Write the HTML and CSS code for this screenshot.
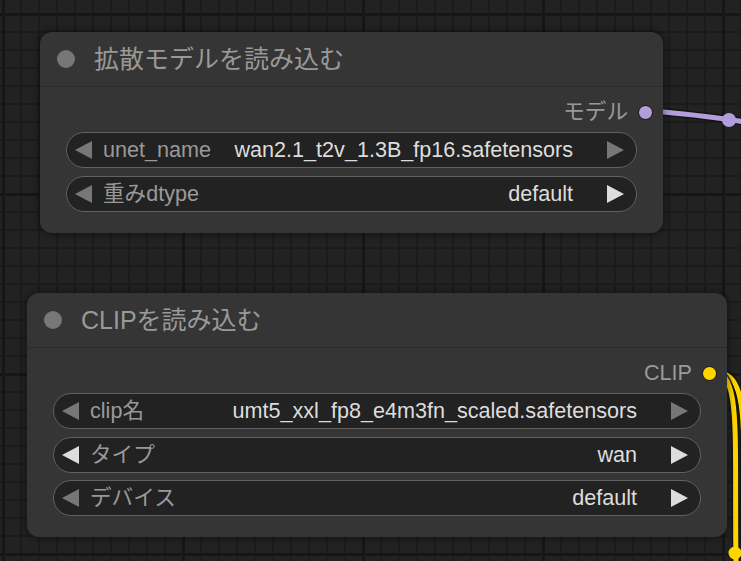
FILE: index.html
```html
<!DOCTYPE html>
<html lang="ja">
<head>
  <meta charset="UTF-8" />
  <title>ComfyUI nodes</title>
  <link rel="stylesheet" href="styles.css">
</head>
<body>
  <div class="canvas">
    <!-- links are drawn under the nodes -->
    <svg class="links" width="741" height="561" viewBox="0 0 741 561">
      <path d="M646 111 C 690 113, 715 118, 760 124" class="link-shadow" />
      <path d="M646 111 C 690 113, 715 118, 760 124" stroke="#b39ddb" class="link" />
      <circle cx="729" cy="120" r="7" fill="#b39ddb" />

      <path d="M711 371 C 752 371, 742 420, 745 561" class="link-shadow" />
      <path d="M711 371 C 752 371, 742 420, 745 561" stroke="#ffd500" class="link" />
      <path d="M711 371 C 742 371, 734 430, 736 561" class="link-shadow" />
      <path d="M711 371 C 742 371, 734 430, 736 561" stroke="#ffd500" class="link" />
      <circle cx="735" cy="553" r="6.5" fill="#ffd500" />
    </svg>

    <div class="node node-model">
      <div class="node-title"><span class="title-dot"></span>拡散モデルを読み込む</div>
      <div class="node-body">
        <div class="slot-out">モデル<span class="slot-dot dot-model"></span></div>
        <div class="widget">
          <span class="arrow arrow-left dim"></span>
          <span class="w-label">unet_name</span>
          <span class="w-value">wan2.1_t2v_1.3B_fp16.safetensors</span>
          <span class="arrow arrow-right dim"></span>
        </div>
        <div class="widget">
          <span class="arrow arrow-left dim"></span>
          <span class="w-label">重みdtype</span>
          <span class="w-value">default</span>
          <span class="arrow arrow-right"></span>
        </div>
      </div>
    </div>

    <div class="node node-clip">
      <div class="node-title"><span class="title-dot"></span>CLIPを読み込む</div>
      <div class="node-body">
        <div class="slot-out">CLIP<span class="slot-dot dot-clip"></span></div>
        <div class="widget">
          <span class="arrow arrow-left dim"></span>
          <span class="w-label">clip名</span>
          <span class="w-value">umt5_xxl_fp8_e4m3fn_scaled.safetensors</span>
          <span class="arrow arrow-right dim"></span>
        </div>
        <div class="widget">
          <span class="arrow arrow-left"></span>
          <span class="w-label">タイプ</span>
          <span class="w-value">wan</span>
          <span class="arrow arrow-right"></span>
        </div>
        <div class="widget">
          <span class="arrow arrow-left dim"></span>
          <span class="w-label">デバイス</span>
          <span class="w-value">default</span>
          <span class="arrow arrow-right"></span>
        </div>
      </div>
    </div>
  </div>
</body>
</html>
```

FILE: styles.css
```css
body {
  margin: 0;
  font-family: "Liberation Sans", "Noto Sans CJK JP", sans-serif;
  background: #111;
}

/* graph canvas with minor / major grid lines */
.canvas {
  position: relative;
  width: 741px;
  height: 561px;
  overflow: hidden;
  background-color: #222;
  background-image:
    linear-gradient(90deg, #161616 3px, transparent 3px),
    linear-gradient(#161616 3px, transparent 3px),
    linear-gradient(90deg, #1b1b1b 2px, transparent 2px),
    linear-gradient(#1b1b1b 2px, transparent 2px);
  background-size: 180px 180px, 180px 180px, 18px 18px, 18px 18px;
  background-position: 2px 13px, 2px 13px, 2px 13px, 2px 13px;
}

.links {
  position: absolute;
  left: 0;
  top: 0;
}
.link {
  fill: none;
  stroke-width: 5;
}
.link-shadow {
  fill: none;
  stroke: #111;
  stroke-width: 8;
  stroke-opacity: 0.8;
}

.node {
  position: absolute;
  background: #353535;
  border-radius: 12px;
  box-shadow: 0 0 7px 2px rgba(0, 0, 0, 0.35);
}
.node-model {
  left: 40px;
  top: 32px;
  width: 623px;
}
.node-clip {
  left: 27px;
  top: 293px;
  width: 700px;
}

.node-title {
  display: flex;
  align-items: center;
  height: 54px;
  line-height: 54px;
  padding-left: 17px;
  border-bottom: 1px solid #2c2c2c;
  color: #999;
  font-size: 25px;
}
.title-dot {
  width: 18px;
  height: 18px;
  border-radius: 50%;
  background: #777;
  margin-right: 19px;
}

.node-body {
  display: flex;
  flex-direction: column;
  padding: 7px 26px 21px 26px;
}

.slot-out {
  display: flex;
  align-items: center;
  justify-content: flex-end;
  height: 36px;
  line-height: 36px;
  margin-right: -16px;
  margin-bottom: 2px;
  color: #999;
  font-size: 21.6px;
}
.slot-dot {
  width: 13px;
  height: 13px;
  border-radius: 50%;
  border: 1.5px solid #111;
  margin-left: 10px;
}
.dot-model {
  background: #b39ddb;
}
.dot-clip {
  background: #ffd500;
}

.widget {
  display: flex;
  align-items: center;
  height: 36px;
  line-height: 34px;
  box-sizing: border-box;
  margin-bottom: 7.5px;
  padding: 0 12px 0 8px;
  border: 1px solid #616161;
  border-radius: 18px;
  background: #222;
  font-size: 21.6px;
}
.widget:last-child {
  margin-bottom: 0;
}
.w-label {
  color: #999;
  margin-left: 11px;
  white-space: nowrap;
}
.w-value {
  flex: 1;
  color: #ddd;
  text-align: right;
  white-space: nowrap;
  margin-right: 34px;
}

.arrow {
  width: 0;
  height: 0;
  border-top: 9px solid transparent;
  border-bottom: 9px solid transparent;
}
.arrow-left {
  border-right: 17px solid #ddd;
}
.arrow-right {
  border-left: 17px solid #ddd;
}
.arrow-left.dim {
  border-right-color: #777;
}
.arrow-right.dim {
  border-left-color: #777;
}
```
